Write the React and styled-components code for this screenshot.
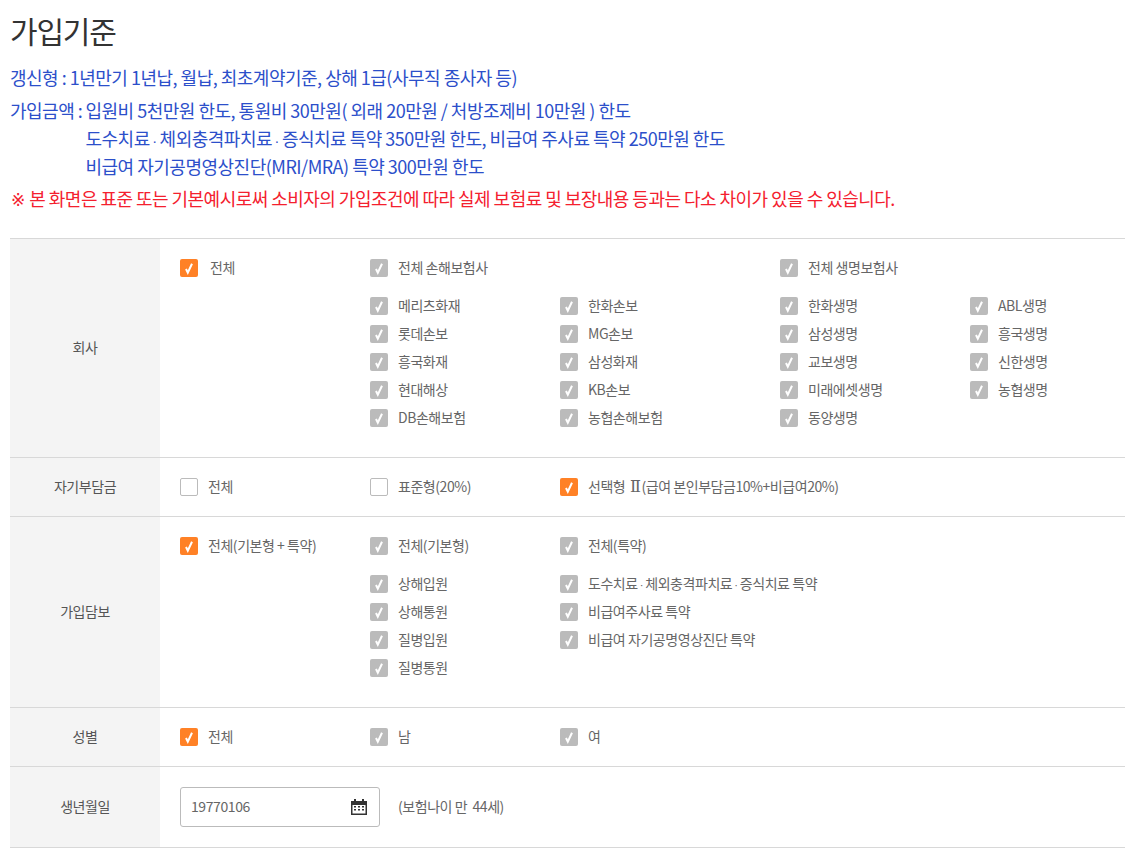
import React from 'react'
import styled, { createGlobalStyle } from 'styled-components'

const GlobalStyle = createGlobalStyle`
  html, body {
    margin: 0;
    padding: 0;
    background: #fff;
    font-family: "Noto Sans CJK KR", "Noto Sans", sans-serif;
  }
`

const companyGroups = ['전체 손해보험사', '전체 생명보험사']

const companies = [
  ['메리츠화재', '한화손보', '한화생명', 'ABL생명'],
  ['롯데손보', 'MG손보', '삼성생명', '흥국생명'],
  ['흥국화재', '삼성화재', '교보생명', '신한생명'],
  ['현대해상', 'KB손보', '미래에셋생명', '농협생명'],
  ['DB손해보험', '농협손해보험', '동양생명', null],
]

function Treatments() {
  return <>도수치료 <Dot>·</Dot> 체외충격파치료 <Dot>·</Dot> 증식치료</>
}

function Check({ state = 'off', gap, children }) {
  return (
    <CheckLabel>
      <CheckBox $state={state}>
        {state !== 'empty' && (
          <svg width="18" height="18" viewBox="0 0 18 18">
            <path d="M6 10 L7.800 13.600 L12 4.800" fill="none" stroke="#fff" strokeWidth="2" />
          </svg>
        )}
      </CheckBox>
      <CheckText $gap={gap}>{children}</CheckText>
    </CheckLabel>
  )
}

function CalendarIcon() {
  return (
    <svg width="16" height="16" viewBox="0 0 16 16">
      <path d="M0 2h3V0h2v2h6V0h2v2h3v14H0z M1.500 6v8.500h13V6z" fill="#333" fillRule="evenodd" />
      <path d="M3 7h2v1.500H3z M7 7h2v1.500H7z M11 7h2v1.500h-2z M3 10h2v1.500H3z M7 10h2v1.500H7z M11 10h2v1.500h-2z" fill="#333" />
    </svg>
  )
}

export default function App() {
  return (
    <Page>
      <GlobalStyle />
      <Title>가입기준</Title>
      <Info>
        <InfoLine>갱신형 : 1년만기 1년납, 월납, 최초계약기준, 상해 1급(사무직 종사자 등)</InfoLine>
        <InfoBlock>
          <InfoLabel>가입금액 :&nbsp;</InfoLabel>
          <InfoLines>
            <span>입원비 5천만원 한도, 통원비 30만원( 외래 20만원 / 처방조제비 10만원 ) 한도</span>
            <span><Treatments /> 특약 350만원 한도, 비급여 주사료 특약 250만원 한도</span>
            <span>비급여 자기공명영상진단(MRI/MRA) 특약 300만원 한도</span>
          </InfoLines>
        </InfoBlock>
        <Notice><Symbol>※</Symbol> 본 화면은 표준 또는 기본예시로써 소비자의 가입조건에 따라 실제 보험료 및 보장내용 등과는 다소 차이가 있을 수 있습니다.</Notice>
      </Info>

      <Table>
        <Row>
          <RowLabel>회사</RowLabel>
          <RowBody $bottom={30}>
            <CompanyGrid>
              <Check state="on" gap={12}>전체</Check>
              <Check>{companyGroups[0]}</Check>
              <span />
              <Check>{companyGroups[1]}</Check>
              <span />
            </CompanyGrid>
            <CheckList>
              {companies.map((row) => (
                <CompanyGrid key={row[0]}>
                  <span />
                  {row.map((name, i) => (name ? <Check key={name}>{name}</Check> : <span key={i} />))}
                </CompanyGrid>
              ))}
            </CheckList>
          </RowBody>
        </Row>

        <Row>
          <RowLabel>자기부담금</RowLabel>
          <RowBody $bottom={20}>
            <OptionGrid>
              <Check state="empty">전체</Check>
              <Check state="empty">표준형(20%)</Check>
              <Check state="on">선택형 <Roman>Ⅱ</Roman>(급여 본인부담금10%+비급여20%)</Check>
            </OptionGrid>
          </RowBody>
        </Row>

        <Row>
          <RowLabel>가입담보</RowLabel>
          <RowBody $bottom={30}>
            <OptionGrid>
              <Check state="on">전체(기본형 + 특약)</Check>
              <Check>전체(기본형)</Check>
              <Check>전체(특약)</Check>
            </OptionGrid>
            <CheckList>
              <OptionGrid>
                <span />
                <Check>상해입원</Check>
                <Check><Treatments /> 특약</Check>
              </OptionGrid>
              <OptionGrid>
                <span />
                <Check>상해통원</Check>
                <Check>비급여주사료 특약</Check>
              </OptionGrid>
              <OptionGrid>
                <span />
                <Check>질병입원</Check>
                <Check>비급여 자기공명영상진단 특약</Check>
              </OptionGrid>
              <OptionGrid>
                <span />
                <Check>질병통원</Check>
              </OptionGrid>
            </CheckList>
          </RowBody>
        </Row>

        <Row>
          <RowLabel>성별</RowLabel>
          <RowBody $bottom={20}>
            <OptionGrid>
              <Check state="on">전체</Check>
              <Check>남</Check>
              <Check>여</Check>
            </OptionGrid>
          </RowBody>
        </Row>

        <Row>
          <RowLabel>생년월일</RowLabel>
          <BirthBody>
            <DateField>
              <DateValue>19770106</DateValue>
              <CalendarIcon />
            </DateField>
            <AgeText>(보험나이 만 &nbsp;44세)</AgeText>
          </BirthBody>
        </Row>
      </Table>
    </Page>
  )
}

const Page = styled.div`
  width: 1125px;
  padding: 10px 0 19px 10px;
  box-sizing: border-box;
`

const Title = styled.h2`
  margin: 0;
  font-size: 30px;
  line-height: 40px;
  font-weight: 400;
  letter-spacing: -1.2px;
  color: #333;
`

const Info = styled.div`
  margin-top: 13px;
  font-size: 18px;
  line-height: 28px;
  letter-spacing: -0.5px;
  color: #2c4fca;
`

const InfoLine = styled.p`
  margin: 0 0 5px;
`

const InfoBlock = styled.div`
  display: flex;
`

const InfoLabel = styled.span`
  width: 75.5px;
  flex: none;
  white-space: nowrap;
`

const InfoLines = styled.div`
  display: flex;
  flex-direction: column;
`

const Dot = styled.span`
  font-family: "Liberation Sans", sans-serif;
  font-size: 0.8em;
  line-height: 1;
  letter-spacing: 0;
  margin: 0 -0.07em;
`

const Symbol = styled.span`
  font-family: "DejaVu Sans", sans-serif;
  font-size: 0.95em;
  line-height: 1;
  margin: 0 1px 0 1px;
`

const Roman = styled.span`
  font-family: "DejaVu Serif", serif;
  font-size: 1.15em;
  line-height: 1;
  margin: 0 1px 0 2px;
`

const Notice = styled.p`
  margin: 4px 0 0;
  color: #f4202e;
  letter-spacing: -0.53px;
`

const Table = styled.div`
  margin-top: 26px;
  border-top: 1px solid #d8d8d8;
`

const Row = styled.div`
  display: flex;
  border-bottom: 1px solid #d8d8d8;
`

const RowLabel = styled.div`
  width: 150px;
  flex: none;
  box-sizing: border-box;
  padding-bottom: 2px;
  display: flex;
  align-items: center;
  justify-content: center;
  background: #f4f4f4;
  font-size: 14px;
  letter-spacing: -0.45px;
  color: #555;
`

const RowBody = styled.div`
  flex: 1;
  padding: 20px 0 ${({ $bottom }) => $bottom}px 20px;
`

const BirthBody = styled.div`
  flex: 1;
  display: flex;
  align-items: center;
  gap: 18px;
  padding: 20px 0 20px 20px;
`

const CompanyGrid = styled.div`
  display: grid;
  grid-template-columns: 190px 190px 220px 190px 1fr;
  height: 18px;
  align-items: center;
`

const OptionGrid = styled.div`
  display: grid;
  grid-template-columns: 190px 190px 1fr;
  height: 18px;
  align-items: center;
`

const CheckList = styled.div`
  display: flex;
  flex-direction: column;
  gap: 10px;
  margin-top: 20px;
`

const CheckLabel = styled.label`
  display: flex;
  align-items: flex-start;
  height: 18px;
  white-space: nowrap;
`

const CheckBox = styled.span`
  width: 18px;
  height: 18px;
  flex: none;
  box-sizing: border-box;
  border-radius: 2px;
  background: ${({ $state }) =>
    $state === 'on' ? '#ff8126' : $state === 'empty' ? '#fff' : '#bbb'};
  border: ${({ $state }) => ($state === 'empty' ? '1px solid #bbb' : 'none')};
  svg {
    display: block;
  }
`

const CheckText = styled.span`
  margin-left: ${({ $gap }) => $gap ?? 10}px;
  font-size: 14px;
  line-height: 16px;
  letter-spacing: -0.45px;
  color: #666;
`

const DateField = styled.div`
  width: 200px;
  height: 40px;
  box-sizing: border-box;
  display: flex;
  align-items: center;
  justify-content: space-between;
  padding: 0 12px 0 10px;
  border: 1px solid #bbb;
  border-radius: 3px;
  font-size: 14px;
  letter-spacing: -0.4px;
  color: #666;
`

const DateValue = styled.span`
  margin-bottom: 2px;
`

const AgeText = styled.span`
  margin-bottom: 2px;
  font-size: 14px;
  letter-spacing: -0.45px;
  color: #666;
`
